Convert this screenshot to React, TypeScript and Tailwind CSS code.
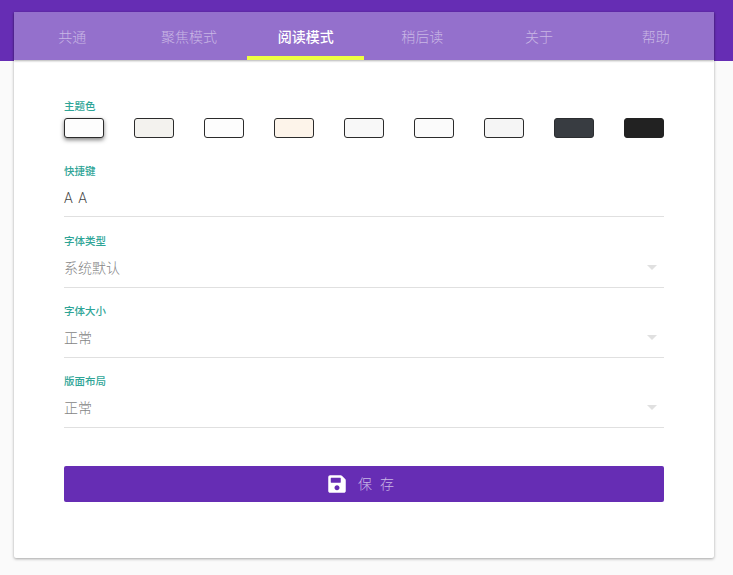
import React from 'react';
import { FaSave } from 'react-icons/fa';

const TABS = ['共通', '聚焦模式', '阅读模式', '稍后读', '关于', '帮助'];
const SWATCHES = [
  { bg: 'bg-[#fdfdfd]', border: 'border-[#2b2b2b]', active: true },
  { bg: 'bg-[#f3f2ee]', border: 'border-[#2b2b2b]' },
  { bg: 'bg-[#fdfdfd]', border: 'border-[#2b2b2b]' },
  { bg: 'bg-[#fdf4ea]', border: 'border-[#2b2b2b]' },
  { bg: 'bg-[#f8f8f8]', border: 'border-[#2b2b2b]' },
  { bg: 'bg-[#fbfbfb]', border: 'border-[#2b2b2b]' },
  { bg: 'bg-[#f5f5f5]', border: 'border-[#2b2b2b]' },
  { bg: 'bg-[#383c41]', border: 'border-[#2b2d30]' },
  { bg: 'bg-[#222222]', border: 'border-[#222222]' },
];

const FONT = "font-['Roboto','Noto_Sans_CJK_SC',sans-serif]";

const Label: React.FC<{ text: string }> = ({ text }) => (
  <div className="text-[10.5px] leading-[12px] font-medium text-[#2fa597]">{text}</div>
);

const SelectField: React.FC<{ label: string; value: string }> = ({ label, value }) => (
  <div className="mt-[18px]">
    <Label text={label} />
    <div className="flex h-[40px] items-center justify-between border-b border-[#e0e0e0] pr-[7px]">
      <span className="text-sm font-light text-[#858585]">{value}</span>
      <span className="h-0 w-0 border-x-[5px] border-t-[5px] border-x-transparent border-t-[#e0e0e0]" />
    </div>
  </div>
);

export default function App() {
  return (
    <div className={`min-h-[575px] bg-[#fafafa] pb-[17px] ${FONT}`}>
      <div className="h-[61px] bg-[#662db4]" />
      <div className="relative mx-[14px] -mt-[49px] h-[546px] w-[700px] rounded-b-[2px] bg-white shadow-[0_1px_3px_rgba(0,0,0,0.35)]">
        <div className="flex h-[48px] bg-[#9470cc] shadow-[0_1px_2px_rgba(0,0,0,0.3)]">
          {TABS.map((tab, i) => (
            <div
              key={tab}
              className={
                i === 2
                  ? 'flex flex-1 items-center justify-center border-b-4 border-[#eeff41] pt-[5px] text-sm font-medium text-white'
                  : 'flex flex-1 items-center justify-center border-b-4 border-transparent pt-[5px] text-sm font-light text-[#c9b7e5]'
              }
            >
              {tab}
            </div>
          ))}
        </div>

        <div className="px-[50px] pt-[41px]">
          <Label text="主题色" />
          <div className="mt-[5px] flex justify-between">
            {SWATCHES.map((s, i) => (
              <div
                key={i}
                className={`h-[20px] w-[40px] rounded-[3px] border ${s.bg} ${s.border} ${s.active ? 'shadow-[0_2px_4px_rgba(0,0,0,0.5)]' : ''}`}
              />
            ))}
          </div>

          <div className="mt-[28px] mb-[19px]">
            <Label text="快捷键" />
            <div className="flex h-[39px] items-center border-b border-[#e0e0e0] pt-[2px] text-sm font-light tracking-[1px] text-[#444444]">A A</div>
          </div>

          <SelectField label="字体类型" value="系统默认" />
          <SelectField label="字体大小" value="正常" />
          <SelectField label="版面布局" value="正常" />

          <button className="mt-[38px] flex h-[36px] w-full items-center justify-center gap-[11px] rounded-[2px] bg-[#662db4] pl-[1px] text-sm font-light tracking-[8px] text-[#c9b7e5]">
            <FaSave className="h-[20px] w-[20px] text-white" />
            <span>保存</span>
          </button>
        </div>
      </div>
    </div>
  );
}
